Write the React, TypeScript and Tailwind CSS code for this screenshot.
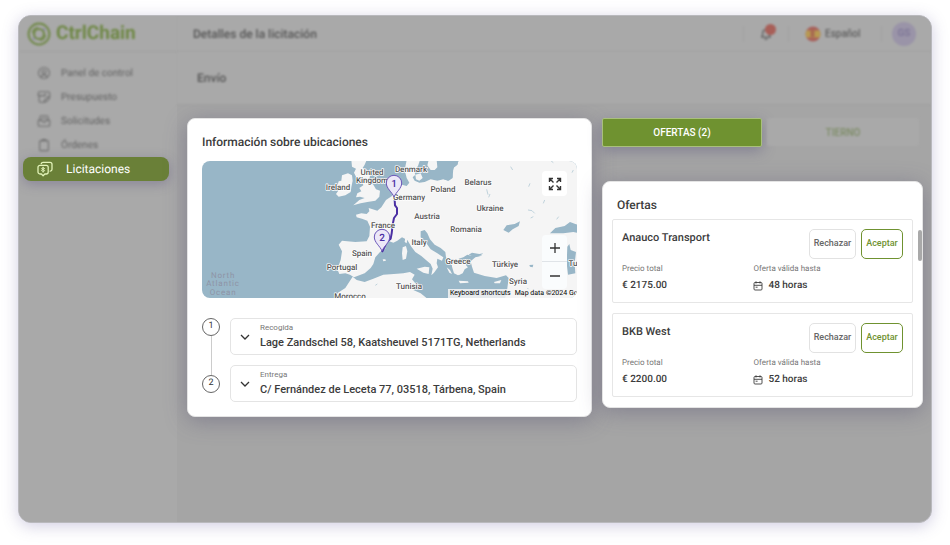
import React from "react";

type IconProps = { className?: string };

const iconBase = {
  viewBox: "0 0 16 16",
  fill: "none",
  stroke: "currentColor",
  strokeLinecap: "round" as const,
  strokeLinejoin: "round" as const,
  "aria-hidden": true,
};

function LogoMark() {
  return (
    <svg viewBox="0 0 24 24" className="size-6" fill="none" stroke="#6f8846" aria-hidden="true">
      <circle cx="12" cy="12" r="10.4" strokeWidth="2" />
      <circle cx="12" cy="12" r="5" strokeWidth="2.2" />
      <path d="M5.5 11A6.8 6.8 0 0 1 11 5.4M18.5 13a6.8 6.8 0 0 1-5.5 5.6" strokeWidth="1.4" />
      <path d="M16.5 6.5l1.5 1.5M6 16l1.5 1.5" stroke="#7d78a8" strokeWidth="1.4" />
    </svg>
  );
}

function DashboardIcon({ className }: IconProps) {
  return (
    <svg {...iconBase} className={className} strokeWidth="1.3">
      <circle cx="8" cy="8" r="6.3" />
      <circle cx="8" cy="6.8" r="2.2" />
      <path d="M4.5 12.6c.8-1.8 2-2.4 3.5-2.4s2.7.6 3.5 2.4" />
    </svg>
  );
}

function QuoteIcon({ className }: IconProps) {
  return (
    <svg {...iconBase} className={className} strokeWidth="1.3">
      <path d="M8 14H4a1.500 1.500 0 0 1-1.500-1.500V6.500H1.500V4a2 2 0 0 1 2-2h9a2 2 0 0 1 2 2v4" />
      <path d="M2.500 6.500h7V4M8 14l1-3 4-3.500 1.500 1.500-3.500 4z" />
    </svg>
  );
}

function RequestIcon({ className }: IconProps) {
  return (
    <svg {...iconBase} className={className} strokeWidth="1.3">
      <path d="M3.500 7V3.500A1.500 1.500 0 0 1 5 2h6a1.500 1.500 0 0 1 1.500 1.500V7" />
      <path d="M1.500 7h4l1 2h3l1-2h4v5.500A1.500 1.500 0 0 1 13 14H3a1.500 1.500 0 0 1-1.500-1.500zM6 4.800h4" />
    </svg>
  );
}

function OrderIcon({ className }: IconProps) {
  return (
    <svg {...iconBase} className={className} strokeWidth="1.3">
      <rect x="3" y="3" width="10" height="11.5" rx="1.5" />
      <path d="M6 3.500V1.800h4v1.700" />
    </svg>
  );
}

function TenderIcon({ className }: IconProps) {
  return (
    <svg {...iconBase} className={className} strokeWidth="1.3">
      <path d="M3 4.300h6.200a2 2 0 0 1 2 2v4.700a2 2 0 0 1-2 2H7.800L6.100 14.700 4.400 13H3a2 2 0 0 1-2-2V6.300a2 2 0 0 1 2-2z" />
      <path d="M4.200 2.700A2 2 0 0 1 6 1.300h7a2 2 0 0 1 2 2v4.900a2 2 0 0 1-1.800 2" />
      <path d="M7.600 7.400c-.5-.7-2.900-.8-3 .3 0 1.200 3 .6 3 1.800 0 1.200-2.500 1-3.100.2M6.100 6.200v5" strokeWidth="1" />
    </svg>
  );
}

function BellIcon({ className }: IconProps) {
  return (
    <svg {...iconBase} className={className} strokeWidth="1.5">
      <path d="M3 11.500h10c-1-1.200-1.300-2.500-1.300-4.500C11.700 4.800 10.200 3 8 3S4.300 4.800 4.300 7c0 2-.3 3.300-1.300 4.500zM6.700 13.800h2.600" />
    </svg>
  );
}

function CalendarIcon({ className }: IconProps) {
  return (
    <svg viewBox="0 0 10 10" fill="none" stroke="currentColor" className={className} aria-hidden="true">
      <rect x="1" y="1.5" width="8" height="7.500" rx="1" strokeWidth="0.9" />
      <path d="M1 4.300h8M3 .3v2.200M7 .3v2.200M2.600 6.200h2" strokeWidth="0.9" />
    </svg>
  );
}

function ChevronIcon() {
  return (
    <svg viewBox="0 0 10 10" className="size-[10px]" fill="none" stroke="#333" strokeWidth="1.3" aria-hidden="true">
      <path d="M1 3l4 4 4-4" />
    </svg>
  );
}

function SpainFlag() {
  return (
    <svg viewBox="0 0 16 16" className="size-4" aria-hidden="true">
      <clipPath id="flag-circle">
        <circle cx="8" cy="8" r="7.5" />
      </clipPath>
      <g clipPath="url(#flag-circle)">
        <rect width="16" height="16" fill="#a8605a" />
        <rect y="4.500" width="16" height="7" fill="#b89a52" />
        <rect x="5.500" y="4" width="4" height="7" fill="#a86a50" />
      </g>
    </svg>
  );
}

const countries: { name: string; x: number; y: number }[] = [
  { name: "United", x: 170, y: 14 },
  { name: "Kingdom", x: 170, y: 22 },
  { name: "Ireland", x: 136, y: 29 },
  { name: "Denmark", x: 209, y: 11 },
  { name: "Poland", x: 241, y: 31 },
  { name: "Germany", x: 207, y: 39 },
  { name: "Belarus", x: 276, y: 24 },
  { name: "Ukraine", x: 288, y: 50 },
  { name: "Austria", x: 225, y: 58 },
  { name: "Romania", x: 264, y: 71 },
  { name: "Italy", x: 217, y: 84 },
  { name: "Greece", x: 256, y: 103 },
  { name: "Türkiye", x: 303, y: 106 },
  { name: "Syria", x: 316, y: 123 },
  { name: "Tu", x: 371, y: 105 },
  { name: "Tunisia", x: 207, y: 128 },
  { name: "France", x: 181, y: 67 },
  { name: "Spain", x: 160, y: 95 },
  { name: "Portugal", x: 140, y: 109 },
  { name: "Morocco", x: 148, y: 138 },
];

function RouteMap() {
  return (
    <svg
      viewBox="0 0 375 137"
      preserveAspectRatio="xMinYMin slice"
      className="block h-full w-full font-['Roboto',sans-serif]"
      role="img"
      aria-label="Mapa de la ruta"
    >
      <rect width="375" height="137" fill="#98b6c7" />
      <g transform="translate(-12 -11) scale(0.333333)">
        <g fill="#f5f5f5">
          {/* Mainland Europe and western Asia */}
          <path d="M650 30H690L684 48L672 62L676 74L668 82L674 92L688 98L704 96L722 88L742 92L760 88L776 92L788 84L786 70L792 52L802 44L806 30H1200V450H944L952 415L956 384L948 376L920 384L884 378L852 368L846 350L842 334L856 322L872 318L882 310L866 300L862 276L868 258L884 240L902 224L920 230L936 246L966 262L990 268L1014 290L1006 306L972 312L930 298L896 306L880 312L868 318L846 318L832 314L820 322L806 326L820 340L834 352L824 358L818 370L806 376L796 366L792 350L780 340L768 322L766 306L752 294L734 284L720 268L712 250L704 240L692 244L692 262L708 278L722 298L742 310L760 322L756 332L742 326L740 340L744 352L732 368L724 376L728 356L722 342L708 330L694 318L676 306L664 290L652 270L636 262L622 272L610 278L594 272L584 278L586 296L570 306L556 322L550 342L542 354L524 370L508 376L492 382L480 374L466 370L448 372L442 358L452 330L456 304L446 284L456 272L496 276L530 274L538 258L540 230L532 212L516 206L500 202L498 194L514 190L530 192L538 184L536 174L548 178L562 182L574 172L588 150L606 138L618 116L636 104L650 108L658 98L650 84L644 60Z" />
          {/* Africa */}
          <path d="M430 450L444 428L466 414L480 392L488 380L500 390L524 396L550 386L580 374L612 372L640 370L660 366L674 374L666 388L678 402L670 420L692 430L712 446V450Z" />
          {/* Great Britain */}
          <path d="M484 30H530L524 44L518 54L532 60L540 76L538 94L550 104L558 118L570 122L568 140L556 152L532 156L512 160L490 166L508 150L524 144L510 140L498 142L502 130L514 124L508 114L520 106L516 90L508 82L500 84L492 68L498 56L486 50Z" />
          {/* Ireland */}
          <path d="M456 76L474 70L486 76L488 92L484 112L482 126L466 136L446 140L438 132L448 118L442 108L446 94L454 92Z" />
          <path d="M646 262L652 268L650 280L644 276ZM638 292L648 288L652 304L648 326L638 330L636 310ZM680 356L704 350L718 352L716 372L700 368ZM578 328L586 328L588 332L580 334ZM806 392L834 394L836 398L810 400ZM912 396L934 390L930 400L914 400ZM676 74L692 70L698 84L688 92L678 88ZM664 50L672 46L676 60L666 60ZM738 30L752 30L748 46L738 40Z" />
        </g>
        <g fill="#98b6c7">
          <path d="M690 30H806L802 44L790 54L788 82L774 92L758 86L744 90L722 84L708 76L704 60L694 50Z" />
          <path d="M940 240L950 226L974 222L990 214L986 228L968 238L956 248ZM1080 250L1096 234L1124 228L1140 216L1156 222L1180 230V252L1150 246L1120 250ZM1132 290L1138 282L1142 300L1158 306L1154 340L1156 370L1134 374L1130 340ZM836 314L846 308L868 312L880 310L868 318L850 320ZM1018 345L1030 344L1028 352L1020 350ZM714 62L720 58L722 68L716 70Z" />
        </g>
        <g fill="#f5f5f5">
          <path d="M716 30H740L742 52L734 60L722 60L712 46ZM784 318L800 324L808 336L800 350L812 362L804 376L792 370L786 350ZM770 352L780 360L786 372L778 368ZM820 338L828 342L830 352L822 348Z" />
        </g>
        <g fill="none" stroke="#b4cbd6" strokeWidth="2.5">
          <path d="M890 118L894 134M900 132L896 142M1014 180L1026 182L1034 190M1022 204L1030 200M1060 160L1064 150M1100 208L1106 200M962 50L968 60M1080 30L1090 38M1100 70L1104 84M1066 108L1060 116M1016 110L1020 100M556 406L562 402M1012 414L1020 422M1150 60L1146 68" />
        </g>
        <path
          d="M614 150L615 166L621 174L621 192L612 204L608 224L605 250L602 266L590 276L580 298L576 306"
          fill="none"
          stroke="#4a2fa3"
          strokeWidth="6"
          strokeLinejoin="round"
        />
      </g>
      <g fontSize="8" fill="#8e94a6" textAnchor="middle" className="tracking-widest">
        <text x="21" y="117">North</text>
        <text x="21" y="125">Atlantic</text>
        <text x="21" y="134">Ocean</text>
      </g>
      <g
        fontSize="8"
        fontWeight="500"
        fill="#555"
        stroke="#fff"
        strokeWidth="1.5"
        strokeLinejoin="round"
        paintOrder="stroke"
        textAnchor="middle"
      >
        {countries.map((c) => (
          <text key={c.name} x={c.x} y={c.y}>
            {c.name}
          </text>
        ))}
      </g>
      {[
        { n: "1", x: 192, y: 22 },
        { n: "2", x: 180, y: 76 },
      ].map((pin) => (
        <g key={pin.n} transform={`translate(${pin.x} ${pin.y})`}>
          <path
            d="M0 14C-2 9-7.700 5.500-7.700 0A7.700 7.700 0 0 1 7.700 0C7.700 5.500 2 9 0 14Z"
            fill="#ece8f8"
            stroke="#6a55b8"
            strokeWidth="1"
          />
          <text y="4" fontSize="10" fontWeight="500" fill="#4a2fa3" textAnchor="middle">
            {pin.n}
          </text>
        </g>
      ))}
    </svg>
  );
}

const navItems = [
  { label: "Panel de control", Icon: DashboardIcon },
  { label: "Presupuesto", Icon: QuoteIcon },
  { label: "Solicitudes", Icon: RequestIcon },
  { label: "Órdenes", Icon: OrderIcon },
];

function Sidebar() {
  return (
    <aside className="w-[158px] shrink-0 bg-[#a9a9a9]">
      <div className="flex h-9 items-center gap-[5px] border-b border-[#a2a2a2] pl-2 blur-[1px]">
        <LogoMark />
        <span className="text-[19px] font-bold text-[#6f8846]">CtrlChain</span>
      </div>
      <nav className="pt-[9px] pr-2 pl-1">
        {navItems.map(({ label, Icon }) => (
          <a
            key={label}
            href="#"
            className="flex h-6 items-center gap-[10px] pl-[14px] text-[10px] text-[#636363] blur-[1px]"
          >
            <Icon className="size-[14px] text-[#707070]" />
            {label}
          </a>
        ))}
        <a
          href="#"
          aria-current="page"
          className="flex h-6 items-center gap-[13px] rounded-[8px] bg-[#6a8038] pl-[14px] text-[12px] text-white shadow-[0_3px_12px_rgba(80,70,120,0.35)]"
        >
          <TenderIcon className="size-4 text-[#e2f3b8]" />
          Licitaciones
        </a>
      </nav>
    </aside>
  );
}

function Header() {
  return (
    <header className="flex h-9 items-center border-b border-[#a1a1a1] bg-[#a9a9a9] pr-[15px] pl-4 blur-[1px]">
      <h1 className="flex-1 text-[12px] font-medium text-[#555]">Detalles de la licitación</h1>
      <button
        type="button"
        aria-label="Notificaciones"
        className="relative flex h-4 w-[46px] items-center justify-center border-x border-[#a0a0a0] text-[#606060]"
      >
        <BellIcon className="size-[14px]" />
        <span className="absolute -top-[2px] right-[12px] size-[11px] rounded-full bg-[#a85f58]" />
      </button>
      <button
        type="button"
        className="flex h-4 w-[93px] items-center gap-1 border-r border-[#a0a0a0] pl-4 text-[10px] font-medium text-[#606060]"
      >
        <SpainFlag />
        Español
      </button>
      <span className="ml-[10px] flex size-6 items-center justify-center rounded-full bg-[#9a94a8] text-[10px] font-medium text-[#7b7396]">
        GS
      </span>
    </header>
  );
}

const stops = [
  { id: "1", label: "Recogida", address: "Lage Zandschel 58, Kaatsheuvel 5171TG, Netherlands" },
  { id: "2", label: "Entrega", address: "C/ Fernández de Leceta 77, 03518, Tárbena, Spain" },
];

function LocationCard() {
  return (
    <section className="rounded-[8px] border border-[#e4e4e4] bg-white px-[14px] pt-[14px] pb-[14px] shadow-[0_4px_22px_rgba(80,75,110,0.4)]">
      <h2 className="text-[12px] leading-[18px] font-medium text-[#3c3c3c]">Información sobre ubicaciones</h2>
      <div className="relative mt-[10px] h-[137px] overflow-hidden rounded-[8px]">
        <RouteMap />
        <button
          type="button"
          aria-label="Pantalla completa"
          className="absolute top-[10px] right-[10px] flex size-[25px] items-center justify-center rounded-[4px] bg-white text-[#333]"
        >
          <svg viewBox="0 0 14 14" className="size-[14px]" fill="none" stroke="currentColor" strokeWidth="1.4" aria-hidden="true">
            <path d="M1.500 5V1.500H5M1.500 1.500L5.500 5.500M9 1.500h3.500V5M12.500 1.500L8.500 5.500M1.500 9v3.500H5M1.500 12.500L5.500 8.500M12.500 9v3.500H9M12.500 12.500L8.500 8.500" />
          </svg>
        </button>
        <div className="absolute right-[10px] bottom-[9px] flex w-[25px] flex-col divide-y divide-[#e0e4e8] rounded-[4px] bg-[#fafcfd] text-[#333]">
          <button type="button" aria-label="Acercar" className="flex h-[27px] items-center justify-center">
            <svg viewBox="0 0 10 10" className="size-[10px]" stroke="currentColor" strokeWidth="1.3" aria-hidden="true">
              <path d="M5 0v10M0 5h10" />
            </svg>
          </button>
          <button type="button" aria-label="Alejar" className="flex h-[27px] items-center justify-center">
            <svg viewBox="0 0 10 10" className="size-[10px]" stroke="currentColor" strokeWidth="1.3" aria-hidden="true">
              <path d="M0 5h10" />
            </svg>
          </button>
        </div>
        <div className="absolute right-0 bottom-0 flex h-[9px] w-[129px] items-center gap-1 overflow-hidden bg-[#f5f5f5]/85 pl-[2px] text-[7px] leading-[9px] whitespace-nowrap text-black">
          <button type="button">Keyboard shortcuts</button>
          <span>Map data ©2024 Goo</span>
        </div>
      </div>
      <ol className="mt-5 flex flex-col gap-[10px]">
        {stops.map((stop, i) => (
          <li key={stop.id} className="flex gap-[10px]">
            <div className={i === 0 ? "relative" : "relative pt-[10px]"}>
              <span className="flex size-[18px] items-center justify-center rounded-full border border-[#666] text-[9px] text-[#333]">
                {stop.id}
              </span>
              {i === 0 && <span className="absolute top-[18px] left-[9px] h-[39px] w-px bg-[#ccc]" />}
            </div>
            <button
              type="button"
              className="flex h-[37px] flex-1 items-center gap-[10px] rounded-[5px] border border-[#e4e4e4] pl-[9px] text-left"
            >
              <ChevronIcon />
              <span className="flex flex-col">
                <span className="text-[8px] leading-[12px] text-[#777]">{stop.label}</span>
                <span className="text-[11px] leading-[18px] font-medium text-[#3c3c3c]">{stop.address}</span>
              </span>
            </button>
          </li>
        ))}
      </ol>
    </section>
  );
}

const offers = [
  { company: "Anauco Transport", price: "€ 2175.00", validity: "48 horas" },
  { company: "BKB West", price: "€ 2200.00", validity: "52 horas" },
];

function OfferList() {
  return (
    <section className="relative rounded-[8px] border border-[#e4e4e4] bg-white px-[9px] pt-[14px] pb-[10px] shadow-[0_4px_22px_rgba(80,75,110,0.4)]">
      <h2 className="pl-[5px] text-[12px] leading-[18px] font-medium text-[#3c3c3c]">Ofertas</h2>
      <ul className="mt-[5px] flex flex-col gap-[10px]">
        {offers.map((offer) => (
          <li key={offer.company} className="rounded-[2px] border border-[#e6e6e6] px-[9px] pt-[9px] pb-2">
            <div className="flex items-start gap-[5px]">
              <h3 className="flex-1 text-[11px] leading-[18px] font-medium text-[#3c3c3c]">{offer.company}</h3>
              <button
                type="button"
                className="h-[30px] w-[47px] rounded-[5px] border border-[#e2e2e2] text-[9px] font-medium text-[#666]"
              >
                Rechazar
              </button>
              <button
                type="button"
                className="h-[30px] w-[42px] rounded-[5px] border border-[#6f9230] text-[9px] font-medium text-[#6f9230]"
              >
                Aceptar
              </button>
            </div>
            <dl className="mt-1 grid grid-cols-[131fr_149fr]">
              <div>
                <dt className="text-[8px] leading-[12px] text-[#777]">Precio total</dt>
                <dd className="mt-[3px] text-[10px] leading-[16px] font-medium text-[#3c3c3c]">{offer.price}</dd>
              </div>
              <div>
                <dt className="text-[8px] leading-[12px] text-[#777]">Oferta válida hasta</dt>
                <dd className="mt-[3px] flex items-center gap-[5px] text-[10px] leading-[16px] font-medium text-[#3c3c3c]">
                  <CalendarIcon className="size-[10px]" />
                  {offer.validity}
                </dd>
              </div>
            </dl>
          </li>
        ))}
      </ul>
      <span className="absolute top-12 right-0 h-[31px] w-1 rounded-full bg-[#a9a9a9]" />
    </section>
  );
}

export default function App() {
  return (
    <div className="flex min-h-screen bg-white px-[18px] pt-[15px] pb-[22px] font-['Roboto',sans-serif] [text-rendering:geometricPrecision]">
      <div className="flex flex-1 overflow-hidden rounded-[13px] border border-[#b9b9bd] bg-[#a5a5a5] shadow-[0_3px_16px_rgba(90,80,150,0.28)]">
        <Sidebar />
        <main className="flex min-w-0 flex-1 flex-col">
          <Header />
          <div className="flex h-[53px] items-center border-b border-[#9f9f9f] bg-[#a9a9a9] pl-5 blur-[1px]">
            <h2 className="text-[12px] font-medium text-[#555]">Envío</h2>
          </div>
          <div className="grid grid-cols-[405fr_321fr] items-start gap-[10px] pt-[13px] pr-2 pl-[10px]">
            <LocationCard />
            <div>
              <div className="flex gap-[5px]">
                <button
                  type="button"
                  className="h-[29px] w-[160px] rounded-[2px] border border-[#a9c07c] bg-[#6f9230] text-[10px] font-medium text-white shadow-[0_4px_14px_rgba(80,75,120,0.4)]"
                >
                  OFERTAS (2)
                </button>
                <button
                  type="button"
                  className="mr-1 h-7 flex-1 rounded-[2px] bg-[#a9a9a9] text-[10px] font-medium text-[#7d8c66] blur-[1px]"
                >
                  TIERNO
                </button>
              </div>
              <div className="mt-[34px]">
                <OfferList />
              </div>
            </div>
          </div>
        </main>
      </div>
    </div>
  );
}
